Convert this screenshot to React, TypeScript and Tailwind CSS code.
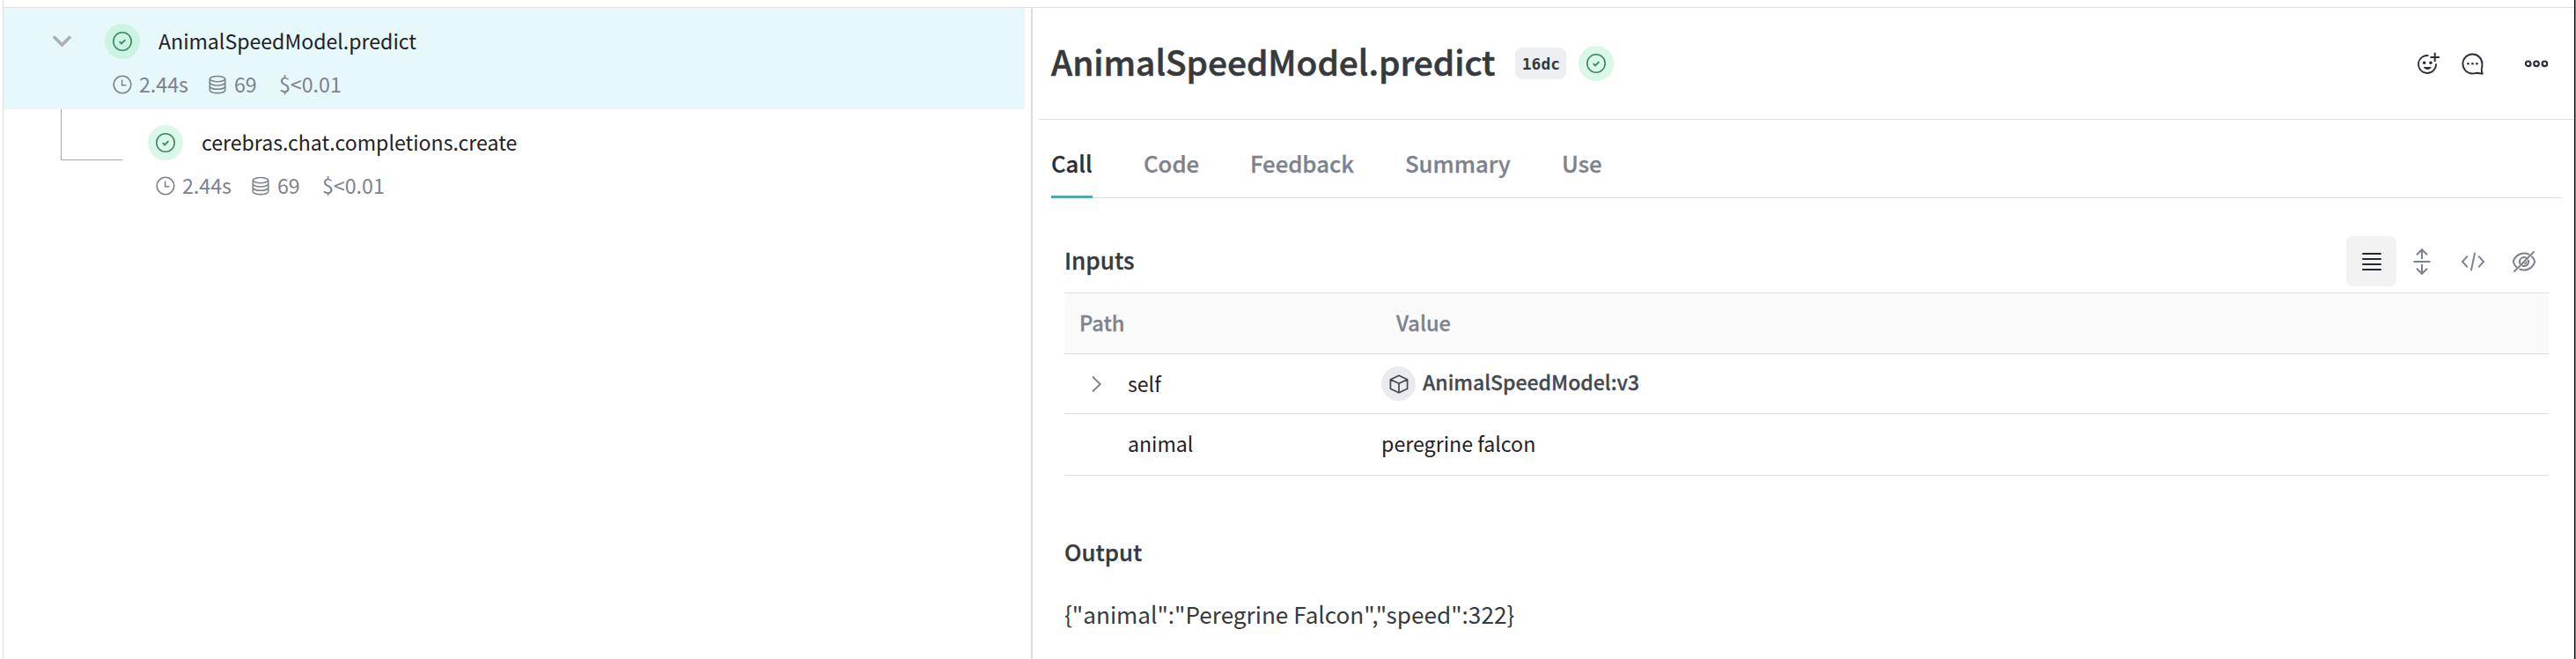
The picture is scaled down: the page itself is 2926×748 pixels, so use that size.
import React from "react";

function StatusBadge({ selected = false }: { selected?: boolean }) {
  return (
    <span
      className={
        "flex size-10 shrink-0 items-center justify-center rounded-full " +
        (selected ? "bg-[#cdf4e2]" : "bg-[#dbf7e7]")
      }
    >
      <svg className="size-6" viewBox="0 0 24 24" fill="none" stroke="#3a8860" strokeWidth="1.6">
        <circle cx="12" cy="12" r="10.2" />
        <path d="M8.7 12.2l2.3 2.3 4.4-4.4" strokeWidth="1.8" />
      </svg>
    </span>
  );
}

function Metrics() {
  return (
    <div className="flex h-[50px] items-center text-[23.2px] leading-none text-[#7d838e]">
      <svg className="size-6" viewBox="0 0 24 24" fill="none" stroke="currentColor" strokeWidth="1.6">
        <circle cx="12" cy="12" r="9.8" />
        <path d="M11.6 6.6v6.2h4.8" />
      </svg>
      <span className="-mt-px ml-[7px] w-[78px]">2.44s</span>
      <svg className="h-6 w-[22px]" viewBox="0 0 22 24" fill="none" stroke="currentColor" strokeWidth="1.6">
        <ellipse cx="11" cy="5.6" rx="8.7" ry="3.1" />
        <path d="M2.3 5.6v12.8c0 1.8 3.9 3.2 8.7 3.2s8.7-1.4 8.7-3.2V5.6" />
        <path d="M2.3 9.8c0 1.8 3.9 3.2 8.7 3.2s8.7-1.4 8.7-3.2M2.3 14.1c0 1.8 3.9 3.2 8.7 3.2s8.7-1.4 8.7-3.2" />
      </svg>
      <span className="-mt-px ml-[8px] w-[51px]">69</span>
      <span className="-mt-px">$&lt;0.01</span>
    </div>
  );
}

function ToolButton({ active = false, children }: { active?: boolean; children: React.ReactNode }) {
  return (
    <button
      className={
        "flex h-[57px] w-[57px] items-center justify-center rounded-lg " +
        (active ? "bg-[#f2f2f2] text-[#232a31]" : "text-[#7d838e]")
      }
    >
      {children}
    </button>
  );
}

const semi = "font-medium [-webkit-text-stroke:0.3px_currentColor]";

export default function App() {
  const tabs = [
    { name: "Call", width: "w-[105px]" },
    { name: "Code", width: "w-[121px]" },
    { name: "Feedback", width: "w-[176px]" },
    { name: "Summary", width: "w-[178px]" },
    { name: "Use", width: "w-[60px]" },
  ];
  return (
    <div className="flex h-[748px] w-[2926px] flex-col overflow-hidden bg-white font-['Noto_Sans_CJK_SC','Noto_Sans',sans-serif]">
      <div className="flex h-[9px] shrink-0 pl-[3px]">
        <div className="h-[9px] flex-1 border-b border-l border-[#dedfe0]" />
        <div className="w-0.5 shrink-0 border-l border-black bg-[#888]" />
      </div>
      <div className="flex min-h-0 flex-1 pl-[3px]">
        <aside className="w-[1168px] shrink-0 border-l border-[#dedfe0]">
          <div className="h-[115px] w-[1160px] bg-[#e6f8f9] pt-[14px]">
            <div className="flex h-12 items-center pl-[55px]">
              <svg className="h-[14px] w-[23px]" viewBox="0 0 23 14" fill="none" stroke="#adafb3" strokeWidth="3.6">
                <path d="M2 1.5l9.5 9.5L21 1.5" />
              </svg>
              <span className="ml-[37px] flex">
                <StatusBadge selected />
              </span>
              <span className="-mt-px ml-[21px] text-[23.1px] leading-none text-[#1f2226]">AnimalSpeedModel.predict</span>
            </div>
            <div className="pl-[123px]">
              <Metrics />
            </div>
          </div>
          <div className="flex pl-[65px]">
            <div className="h-[58px] w-[70px] border-b border-l border-[#a8abae]" />
            <div className="pt-[14px] pl-[29px]">
              <div className="flex h-12 items-center">
                <StatusBadge />
                <span className="-mt-px ml-[21px] text-[23.1px] leading-none text-[#1f2226]">
                  cerebras.chat.completions.create
                </span>
              </div>
              <div className="pl-[8px]">
                <Metrics />
              </div>
            </div>
          </div>
        </aside>

        <main className="flex min-w-0 flex-1 flex-col border-l-2 border-[#dadce1] pl-[7px]">
          <header className="flex h-[127px] shrink-0 items-center border-b border-[#dedfe0] pl-[14px]">
            <h1 className="-mt-1.5 text-[38.8px] leading-none font-medium text-[#363a3d] [-webkit-text-stroke:0.6px_currentColor]">
              AnimalSpeedModel.predict
            </h1>
            <span className="ml-[23px] flex h-9 w-[58px] items-center justify-center rounded-lg bg-[#eeeff3] font-['DejaVu_Sans_Mono',monospace] text-[18px] font-bold text-[#363a3d]">
              16dc
            </span>
            <span className="ml-[14px] flex">
              <StatusBadge />
            </span>
            <div className="mr-[29px] ml-auto flex items-center gap-[24px] text-[#2b3038]">
              <svg className="h-7 w-[27px]" viewBox="0 0 27 28" fill="none" stroke="currentColor" strokeWidth="1.8">
                <path d="M13.5 5.1A10 10 0 1 0 22 14.4" />
                <path d="M20.7 1.7v10.4M15.5 6.9h10.4" strokeWidth="2" />
                <circle cx="8.6" cy="13.3" r="1.8" fill="currentColor" stroke="none" />
                <circle cx="16" cy="13.3" r="1.8" fill="currentColor" stroke="none" />
                <path d="M7.8 18h9c-.8 1.9-2.5 3-4.5 3s-3.7-1.1-4.5-3z" fill="currentColor" stroke="none" />
              </svg>
              <svg className="h-7 w-[26px]" viewBox="0 0 26 28" fill="none" stroke="currentColor" strokeWidth="1.9" strokeLinejoin="round">
                <path d="M23.4 14.2A11 11 0 1 0 12.4 25.5c2 0 3.3-.5 5-.7l6.3.9c-.8-1.7-1-3.2-1-4.9.6-1.9.9-4.2.7-6.6z" />
                <circle cx="7.4" cy="14.3" r="1.3" fill="currentColor" stroke="none" />
                <circle cx="12.4" cy="14.3" r="1.3" fill="currentColor" stroke="none" />
                <circle cx="17.4" cy="14.3" r="1.3" fill="currentColor" stroke="none" />
              </svg>
              <svg className="ml-[21px] h-7 w-7" viewBox="0 0 28 28" fill="none" stroke="currentColor" strokeWidth="2.2">
                <circle cx="4.7" cy="14.3" r="2.8" />
                <circle cx="14" cy="14.3" r="2.8" />
                <circle cx="23.4" cy="14.3" r="2.8" />
              </svg>
            </div>
          </header>

          <nav className="relative mr-[14px] ml-[14px] flex h-[89px] shrink-0 border-b border-[#d9dce1] text-[25.7px] leading-none">
            {tabs.map((t, i) => (
              <div key={t.name} className={t.width}>
                <span
                  className={
                    semi +
                    " inline-flex h-[89px] items-center border-b-3 pb-[3px] " +
                    (i === 0 ? "border-[#51a5b5] text-[#2b3038]" : "border-transparent text-[#7d838e]")
                  }
                >
                  <span className="mt-[15px]">{t.name}</span>
                </span>
              </div>
            ))}
          </nav>

          <section className="mr-[29px] ml-[29px]">
            <div className="flex h-[107px] items-end pb-[7px]">
              <h2 className={semi + " mb-[17px] text-[26.1px] leading-none text-[#363a3d]"}>Inputs</h2>
              <div className="ml-auto flex gap-[0.6px]">
                <ToolButton active>
                  <svg className="h-6 w-[22px]" viewBox="0 0 22 24" stroke="currentColor" strokeWidth="2" strokeLinecap="round">
                    <path d="M1 3h20M1 9h20M1 15h20M1 21h20" />
                  </svg>
                </ToolButton>
                <ToolButton>
                  <svg className="h-[32px] w-[20px]" viewBox="0 0 20 32" fill="none" stroke="currentColor" strokeWidth="2">
                    <path d="M.5 16h19M10 13V2.5M4 8.2l6-6 6 6M10 19v10.5M4 23.8l6 6 6-6" />
                  </svg>
                </ToolButton>
                <ToolButton>
                  <svg className="h-6 w-[28px]" viewBox="0 0 28 24" fill="none" stroke="currentColor" strokeWidth="2" strokeLinecap="round">
                    <path d="M7.3 6.2L2 12l5.3 5.8M20.7 6.2L26 12l-5.3 5.8M16 2.5l-4 19" />
                  </svg>
                </ToolButton>
                <ToolButton>
                  <svg className="h-[26px] w-[28px]" viewBox="0 0 28 26" fill="none" stroke="currentColor" strokeWidth="2" strokeLinecap="round">
                    <path d="M19.5 4.7C17.8 3.9 16 3.5 14 3.5 7.5 3.5 3 8 1.7 13c.6 2.3 1.9 4.5 3.8 6.2M9.2 21.6c1.5.6 3.1.9 4.8.9 6.5 0 11-4.5 12.3-9.5-.6-2.2-1.7-4.2-3.4-5.8" />
                    <path d="M16.5 8.7A5 5 0 0 0 9.5 15.2M12.2 17.7A5 5 0 0 0 18.8 11.5" />
                    <path d="M14.7 15.5a2.6 2.6 0 0 0 2-2.2" strokeWidth="1.5" />
                    <path d="M25 2L3 24" />
                  </svg>
                </ToolButton>
              </div>
            </div>
            <div className="border-t border-[#dedfe0] text-[23.1px] leading-none text-[#1f2226]">
              <div className={"grid h-[69px] grid-cols-[377px_1fr] items-center rounded-t-lg border-b border-[#dedfe0] bg-[#fafafa] text-[23.6px] text-[#7d838e] " + semi}>
                <span className="pl-[17px]">Path</span>
                <span>Value</span>
              </div>
              <div className="grid h-[68px] grid-cols-[360px_1fr] items-center border-b border-[#dedfe0]">
                <div className="flex items-center">
                  <svg className="ml-[30px] h-5 w-[14px]" viewBox="0 0 14 20" fill="none" stroke="#7d838e" strokeWidth="1.9">
                    <path d="M2 1.5l8.7 8.5L2 18.5" />
                  </svg>
                  <span className="mt-px ml-[28px]">self</span>
                </div>
                <div className="flex items-center">
                  <span className="flex size-[39px] items-center justify-center rounded-full bg-[#eaebef]">
                    <svg className="size-[22px]" viewBox="0 0 22 22" fill="none" stroke="#424953" strokeWidth="1.7" strokeLinejoin="round">
                      <path d="M11 1.2l9.6 4.6v10.4L11 20.8 1.4 16.2V5.8zM1.4 5.8L11 10.3l9.6-4.5M11 10.3v10.5" />
                    </svg>
                  </span>
                  <span className={semi + " -mt-[4px] ml-[8px] text-[23px] text-[#424953]"}>AnimalSpeedModel:v3</span>
                </div>
              </div>
              <div className="grid h-[70px] grid-cols-[360px_1fr] items-center border-b border-[#dedfe0]">
                <span className="-mt-0.5 pl-[72px]">animal</span>
                <span className="-mt-0.5 text-[23.2px]">peregrine falcon</span>
              </div>
            </div>
            <h2 className={semi + " mt-[73px] text-[25.8px] leading-none text-[#363a3d]"}>Output</h2>
            <p className="mt-[45px] text-[26.15px] leading-none text-[#363a3d]">{'{"animal":"Peregrine Falcon","speed":322}'}</p>
          </section>
        </main>
        <div className="w-0.5 shrink-0 border-l border-black bg-[#888]" />
      </div>
    </div>
  );
}
